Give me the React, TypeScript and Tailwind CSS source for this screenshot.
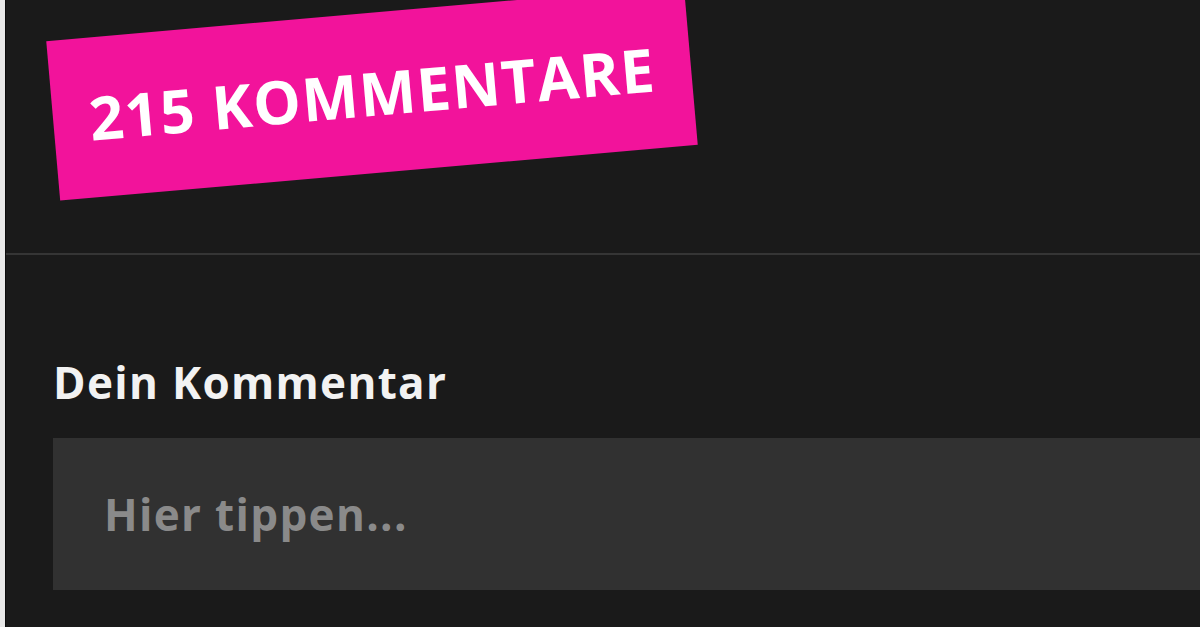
export default function App() {
  return (
    <div className="flex h-[627px] w-[1200px] overflow-hidden bg-[#1a1a1a] font-['Open_Sans',sans-serif]">
      <div className="w-[5px] shrink-0 bg-[#e8e8e8]" />
      <div className="w-px shrink-0 bg-[#0c0c0c]" />
      <main className="flex min-w-0 flex-1 flex-col">
        <header className="h-[255px] shrink-0 border-b-2 border-[#353535] pl-[46px] pt-[12.5px]">
          <div className="flex h-[160px] w-[640px] -rotate-5 items-center justify-center bg-[#f2139b]">
            <span className="text-[60px] font-bold leading-none tracking-[0.02em] text-white">215 KOMMENTARE</span>
          </div>
        </header>
        <section className="flex flex-col pl-[47px] pt-[105px]">
          <label className="text-[44px] font-bold leading-none tracking-[0.03em] text-[#f2f2f2]">Dein Kommentar</label>
          <div className="mt-[34px] flex h-[152px] items-center bg-[#313131] pl-[51px]">
            <span className="text-[44px] font-bold leading-none tracking-[0.03em] text-[#8a8a8a]">Hier tippen...</span>
          </div>
        </section>
      </main>
    </div>
  );
}
